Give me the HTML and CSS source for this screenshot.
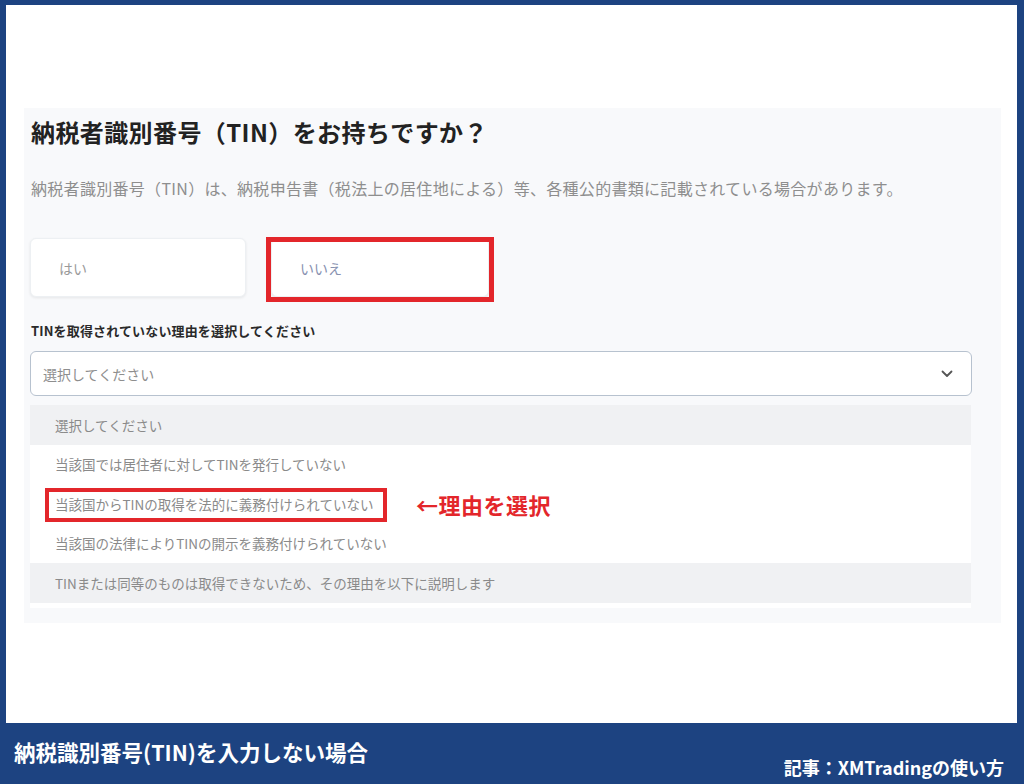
FILE: index.html
```html
<!DOCTYPE html>
<html lang="ja">
<head>
<meta charset="utf-8">
<title>TIN</title>
<link rel="stylesheet" href="styles.css">
</head>
<body>
<div class="page">
  <div class="canvas">
    <section class="panel">
      <h1 class="title">納税者識別番号（TIN）をお持ちですか？</h1>
      <p class="desc">納税者識別番号（TIN）は、納税申告書（税法上の居住地による）等、各種公的書類に記載されている場合があります。</p>
      <div class="choices">
        <div class="choice">はい</div>
        <div class="choice choice-no">いいえ<span class="mark mark-no"></span></div>
      </div>
      <div class="label">TINを取得されていない理由を選択してください</div>
      <div class="select">
        <span class="placeholder">選択してください</span>
        <svg class="chevron" width="12" height="8" viewBox="0 0 12 8"><path d="M1.5 1.5 L6 6 L10.5 1.5" fill="none" stroke="#555" stroke-width="1.8" stroke-linecap="round" stroke-linejoin="round"/></svg>
      </div>
      <ul class="options">
        <li class="opt opt-grey">選択してください</li>
        <li class="opt">当該国では居住者に対してTINを発行していない</li>
        <li class="opt opt-marked">当該国からTINの取得を法的に義務付けられていない<span class="mark mark-opt"></span><span class="note">←理由を選択</span></li>
        <li class="opt">当該国の法律によりTINの開示を義務付けられていない</li>
        <li class="opt opt-grey">TINまたは同等のものは取得できないため、その理由を以下に説明します</li>
      </ul>
    </section>
  </div>
  <footer class="footer">
    <div class="foot-title">納税識別番号(TIN)を入力しない場合</div>
    <div class="foot-credit">記事：XMTradingの使い方</div>
  </footer>
</div>
</body>
</html>
```
FILE: styles.css
```css
* { box-sizing: border-box; }
html, body { margin: 0; padding: 0; }
body {
  width: 1024px;
  height: 784px;
  overflow: hidden;
  font-family: "Noto Sans CJK JP", "Noto Sans", sans-serif;
}
.page {
  width: 1024px;
  height: 784px;
  background: #1d4381;
  display: flex;
  flex-direction: column;
  padding: 5px 7px 0 6px;
}
.canvas {
  height: 718px;
  background: #ffffff;
  padding: 103px 0 0 18px;
}
.panel {
  width: 977px;
  height: 515px;
  background: #f8f9fb;
  padding: 8px 0 0 6px;
}
.title {
  margin: 0 0 0 1px;
  font-size: 24px;
  line-height: 32px;
  font-weight: 700;
  color: #222222;
  letter-spacing: 0.4px;
}
.desc {
  margin: 28px 0 0 1px;
  font-size: 16px;
  line-height: 24px;
  color: #8e8e8e;
  letter-spacing: 0.3px;
}
.choices {
  display: flex;
  gap: 25px;
  margin-top: 38px;
}
.choice {
  position: relative;
  width: 216px;
  height: 59px;
  background: #ffffff;
  border: 1px solid #edf0f3;
  border-radius: 6px;
  box-shadow: 0 1px 3px rgba(0, 0, 0, 0.08);
  display: flex;
  align-items: center;
  padding-left: 28px;
  font-size: 14px;
  color: #9a9a9a;
}
.choice-no {
  width: 218px;
  color: #8791b0;
}
.mark {
  position: absolute;
  border: 5px solid #e3262b;
  pointer-events: none;
}
.mark-no {
  top: -2px;
  left: -6px;
  right: -6px;
  bottom: -6px;
}
.label {
  margin: 24px 0 0 1px;
  font-size: 13px;
  line-height: 20px;
  font-weight: 700;
  color: #2a2a2a;
  letter-spacing: 0.15px;
}
.select {
  margin-top: 10px;
  width: 942px;
  height: 45px;
  background: #ffffff;
  border: 1px solid #b7c2cf;
  border-radius: 6px;
  display: flex;
  align-items: center;
  justify-content: space-between;
  padding: 0 18px 0 12px;
  font-size: 14px;
  color: #8e8e8e;
}
.chevron { display: block; }
.options {
  list-style: none;
  margin: 9px 0 0 0;
  padding: 0 0 5px 0;
  width: 941px;
  background: #ffffff;
}
.opt {
  position: relative;
  height: 39.5px;
  display: flex;
  align-items: center;
  padding-left: 25px;
  font-size: 13.5px;
  color: #8a8a8a;
}
.opt-grey { background: #f0f1f3; }
.mark-opt {
  border-width: 4px;
  top: 4px;
  left: 15px;
  width: 342px;
  height: 34px;
}
.note {
  position: absolute;
  left: 386px;
  top: 5px;
  font-size: 22px;
  line-height: 30px;
  font-weight: 700;
  color: #e3262b;
  letter-spacing: 0.5px;
}
.footer {
  flex: 1;
  display: flex;
  justify-content: space-between;
  margin: 0 -7px 0 -6px;
  padding: 14px 20px 5px 14px;
  color: #ffffff;
  font-weight: 700;
}
.foot-title {
  font-size: 21.5px;
  line-height: 30px;
}
.foot-credit {
  align-self: flex-end;
  font-size: 18px;
  line-height: 24px;
}
```
